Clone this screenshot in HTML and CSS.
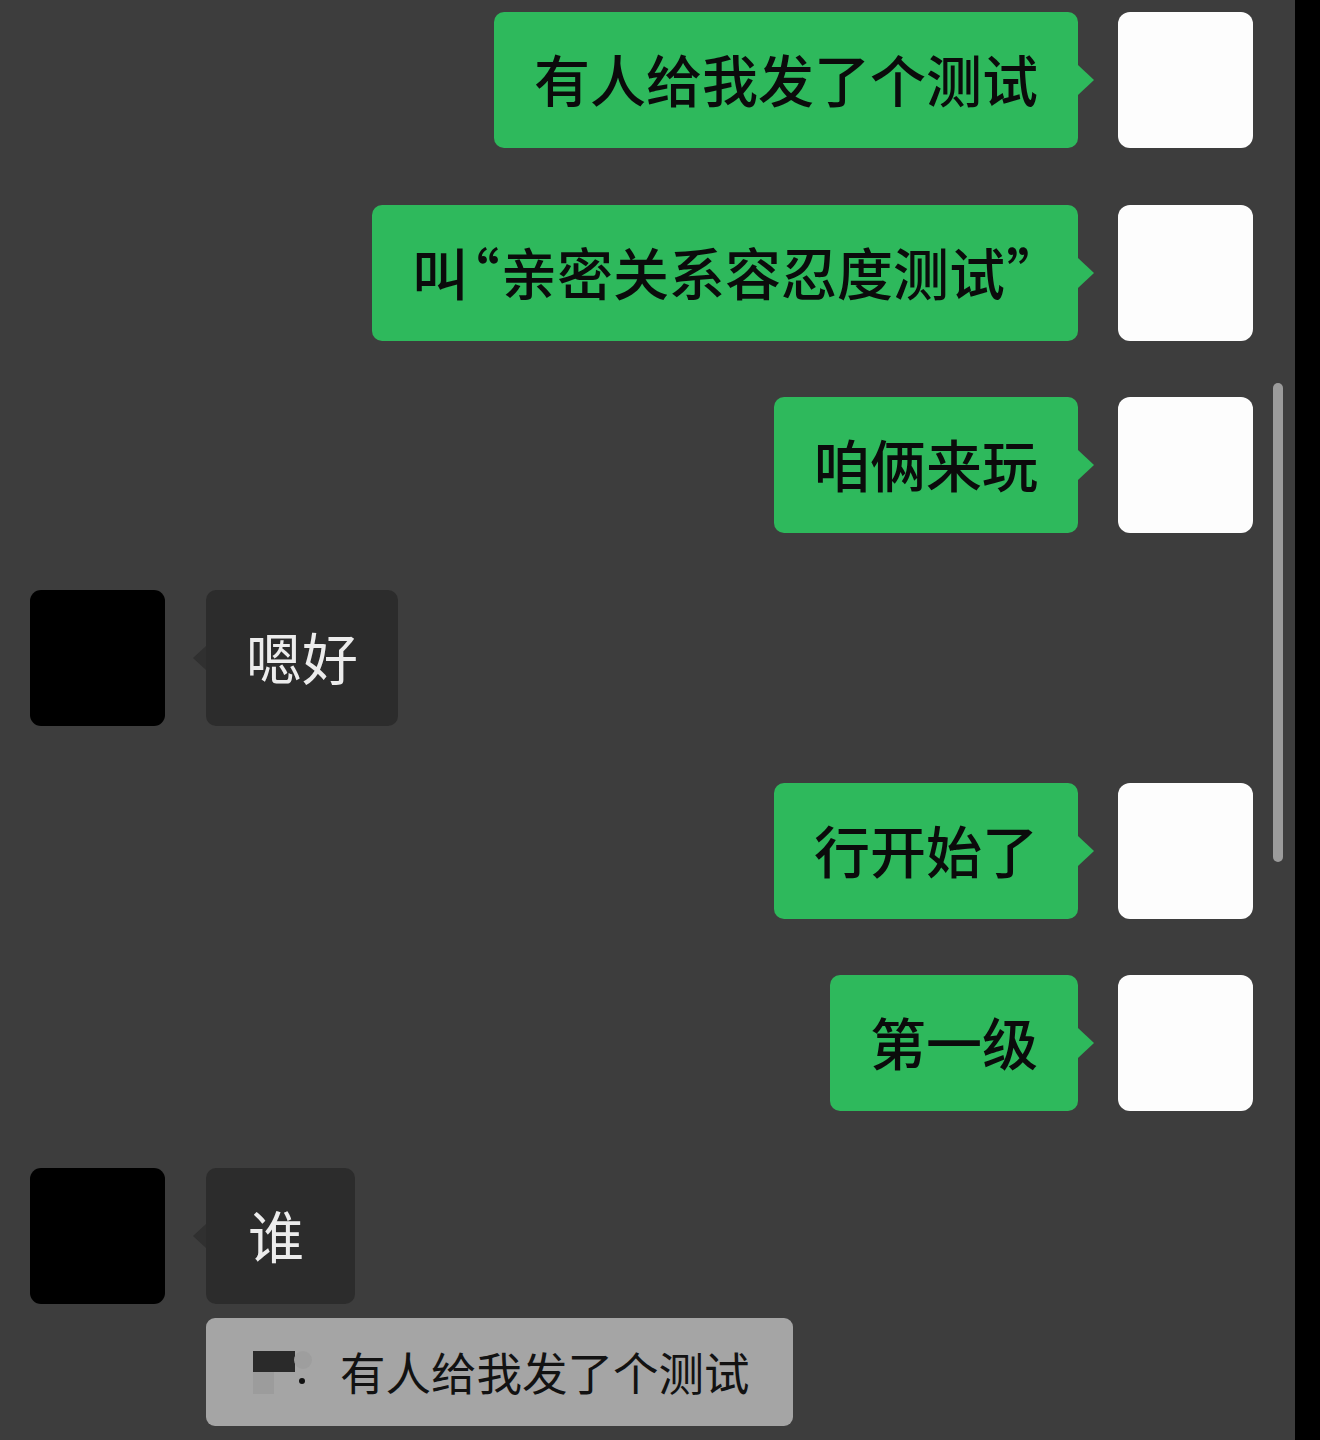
FILE: index.html
```html
<!DOCTYPE html>
<html lang="zh-CN">
<head>
<meta charset="utf-8">
<title>聊天</title>
<link rel="stylesheet" href="styles.css">
</head>
<body>
<div class="screen">
  <div class="chat">
    <div class="row sent">
      <div class="bubble">有人给我发了个测试</div>
      <div class="avatar"></div>
    </div>
    <div class="row sent">
      <div class="bubble">叫<span class="q open">“</span>亲密关系容忍度测试<span class="q close">”</span></div>
      <div class="avatar"></div>
    </div>
    <div class="row sent">
      <div class="bubble">咱俩来玩</div>
      <div class="avatar"></div>
    </div>
    <div class="row recv">
      <div class="avatar"></div>
      <div class="bubble">嗯好</div>
    </div>
    <div class="row sent">
      <div class="bubble">行开始了</div>
      <div class="avatar"></div>
    </div>
    <div class="row sent">
      <div class="bubble">第一级</div>
      <div class="avatar"></div>
    </div>
    <div class="row recv">
      <div class="avatar"></div>
      <div class="bubble single">谁</div>
    </div>
    <div class="quote">
      <span class="redact">
        <svg width="60" height="44" viewBox="0 0 60 44">
          <rect x="0" y="0" width="42" height="21" fill="#2a2a2a"/>
          <rect x="0" y="21" width="21" height="22" fill="#9c9c9c"/>
          <circle cx="50" cy="9" r="9" fill="#9e9e9e"/>
          <circle cx="49" cy="30" r="3" fill="#111"/>
        </svg>
      </span>
      <span class="qtext">有人给我发了个测试</span>
    </div>
    <div class="scrollbar"></div>
  </div>
  <div class="edge"></div>
</div>
</body>
</html>
```
FILE: styles.css
```css
html, body {
  margin: 0;
  padding: 0;
  background: #000;
}
body {
  font-family: "Noto Sans CJK SC", "Noto Sans", sans-serif;
}
.screen {
  display: flex;
  width: 1320px;
  height: 1440px;
  overflow: hidden;
}
.chat {
  position: relative;
  width: 1295px;
  height: 1440px;
  background: #3d3d3d;
  padding-top: 12px;
  box-sizing: border-box;
  display: flex;
  flex-direction: column;
  gap: 56.7px;
}
.edge {
  flex: 1;
  background: #000;
}
.row {
  display: flex;
  align-items: center;
  height: 136px;
}
.row.sent {
  justify-content: flex-end;
  padding-right: 42px;
  gap: 40px;
}
.row.recv {
  justify-content: flex-start;
  padding-left: 30px;
  gap: 41px;
}
.avatar {
  width: 135px;
  height: 136px;
  border-radius: 12px;
  flex: none;
}
.sent .avatar {
  background: #fdfdfd;
}
.recv .avatar {
  background: #000;
  border-radius: 11px;
}
.bubble {
  position: relative;
  height: 136px;
  box-sizing: border-box;
  padding: 0 40px 4px;
  display: flex;
  align-items: center;
  font-size: 56px;
  line-height: 1;
  border-radius: 10px;
  white-space: nowrap;
}
.sent .bubble {
  background: #2eb95c;
  color: #0b0b0b;
  font-weight: 500;
}
.sent .bubble::after {
  content: "";
  position: absolute;
  right: -16px;
  top: 50%;
  margin-top: -15px;
  border-style: solid;
  border-width: 15px 0 15px 16px;
  border-color: transparent transparent transparent #2eb95c;
}
.recv .bubble {
  background: #2c2c2c;
  color: #ececec;
  font-weight: 400;
}
.recv .bubble::before {
  content: "";
  position: absolute;
  left: -13px;
  top: 50%;
  margin-top: -12px;
  border-style: solid;
  border-width: 12px 13px 12px 0;
  border-color: transparent #303030 transparent transparent;
}
.recv .bubble.single {
  min-width: 149px;
  padding-left: 42px;
}
.q {
  font-feature-settings: "palt" 1;
}
.q.open {
  margin: 0 2px 0 3px;
}
.q.close {
  margin: 0 3px 0 2px;
}
.quote {
  margin-top: -42.7px;
  margin-left: 206px;
  width: 587px;
  height: 108px;
  box-sizing: border-box;
  background: #a5a5a5;
  border-radius: 9px;
  display: flex;
  align-items: center;
  padding-left: 47px;
  gap: 27px;
}
.redact {
  display: flex;
  margin-top: 2px;
}
.qtext {
  font-size: 45.5px;
  line-height: 1;
  color: #121212;
}
.scrollbar {
  position: absolute;
  left: 1273px;
  top: 383px;
  width: 10px;
  height: 479px;
  border-radius: 5px;
  background: #9b9b9b;
}
```
